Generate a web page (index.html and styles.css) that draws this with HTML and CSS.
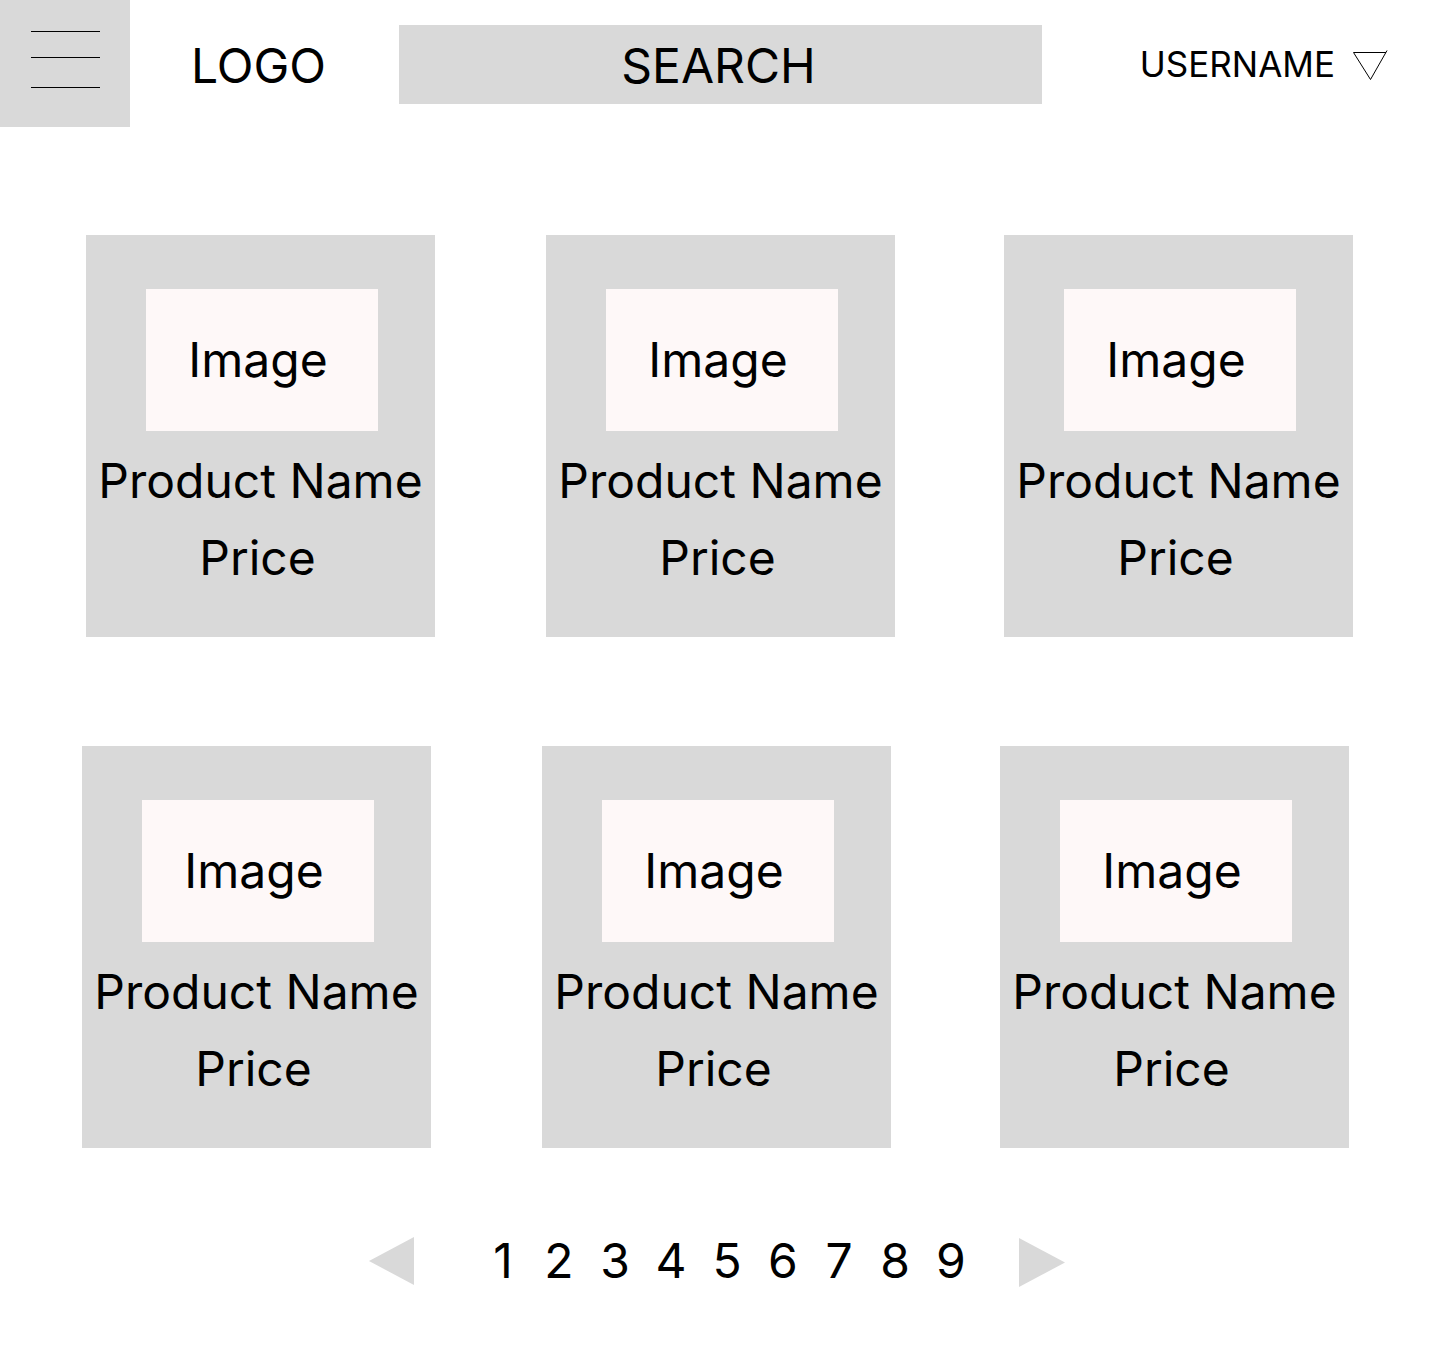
FILE: index.html
```html
<!DOCTYPE html>
<html lang="en">
<head>
<meta charset="utf-8">
<title>Products</title>
<link rel="stylesheet" href="styles.css">
</head>
<body>
<header class="topbar">
  <div class="menu">
    <span class="menu-line"></span>
    <span class="menu-line menu-line--2"></span>
    <span class="menu-line menu-line--3"></span>
  </div>
  <div class="logo">LOGO</div>
  <div class="search">SEARCH</div>
  <div class="user">
    <span class="user-name">USERNAME</span>
    <svg class="user-caret" width="35" height="31" viewBox="0 0 35 31">
      <line x1="0.5" y1="2.5" x2="33" y2="2.5" stroke="#000" stroke-width="1"/>
      <line x1="0.5" y1="2.5" x2="17.5" y2="29.5" stroke="#000" stroke-width="1"/>
      <line x1="34" y1="0.5" x2="17.5" y2="29.5" stroke="#000" stroke-width="1"/>
    </svg>
  </div>
</header>

<main class="products">
  <div class="card-row">
    <div class="card"><div class="card-image">Image</div><div class="card-name">Product Name</div><div class="card-price">Price</div></div>
    <div class="card"><div class="card-image">Image</div><div class="card-name">Product Name</div><div class="card-price">Price</div></div>
    <div class="card"><div class="card-image">Image</div><div class="card-name">Product Name</div><div class="card-price">Price</div></div>
  </div>
  <div class="card-row card-row--second">
    <div class="card"><div class="card-image">Image</div><div class="card-name">Product Name</div><div class="card-price">Price</div></div>
    <div class="card"><div class="card-image">Image</div><div class="card-name">Product Name</div><div class="card-price">Price</div></div>
    <div class="card"><div class="card-image">Image</div><div class="card-name">Product Name</div><div class="card-price">Price</div></div>
  </div>
</main>

<nav class="pager">
  <svg class="pager-prev" width="45" height="48" viewBox="0 0 45 48"><polygon points="45,0 45,48 0,24" fill="#d9d9d9"/></svg>
  <div class="pager-pages">
    <span class="pager-num">1</span><span class="pager-num">2</span><span class="pager-num">3</span><span class="pager-num">4</span><span class="pager-num">5</span><span class="pager-num">6</span><span class="pager-num">7</span><span class="pager-num">8</span><span class="pager-num">9</span>
  </div>
  <svg class="pager-next" width="46" height="49" viewBox="0 0 46 49"><polygon points="0,0 46,24.5 0,49" fill="#d9d9d9"/></svg>
</nav>
</body>
</html>
```

FILE: styles.css
```css
* {
  box-sizing: border-box;
}

html, body {
  margin: 0;
  padding: 0;
  background: #ffffff;
}

body {
  font-family: Inter, "Noto Sans", sans-serif;
  color: #000000;
  width: 1440px;
  height: 1364px;
  overflow: hidden;
}

/* Header */
.topbar {
  display: flex;
  align-items: flex-start;
  height: 127px;
}

.menu {
  width: 130px;
  height: 127px;
  background: #d9d9d9;
  display: flex;
  flex-direction: column;
  padding: 31px 0 0 31px;
}

.menu-line {
  display: block;
  width: 69px;
  height: 1px;
  background: #000000;
}

.menu-line--2 {
  margin-top: 25px;
}

.menu-line--3 {
  margin-top: 29px;
}

.logo {
  width: 269px;
  padding-left: 61px;
  margin-top: 42px;
  font-size: 48px;
  line-height: 48px;
}

.search {
  width: 643px;
  height: 79px;
  margin-top: 25px;
  background: #d9d9d9;
  font-size: 48px;
  line-height: 79px;
  padding: 1px 4px 0 0;
  text-align: center;
}

.user {
  margin-left: auto;
  margin-top: 46px;
  padding-right: 52px;
  display: flex;
  align-items: flex-start;
  gap: 18px;
}

.user-name {
  font-size: 35px;
  line-height: 36px;
}

.user-caret {
  display: block;
  margin-top: 4px;
}

/* Product grid */
.products {
  padding-top: 108px;
}

.card-row {
  display: grid;
  grid-template-columns: 460px 458px 349px;
  padding-left: 86px;
}

.card-row--second {
  margin-top: 109px;
  padding-left: 82px;
}

.card {
  width: 349px;
  height: 402px;
  background: #d9d9d9;
  display: flex;
  flex-direction: column;
}

.card-image {
  width: 232px;
  height: 142px;
  margin: 54px 0 0 60px;
  padding-right: 8px;
  background: #fef8f8;
  font-size: 48px;
  line-height: 142px;
  text-align: center;
}

.card-name,
.card-price {
  font-size: 48px;
  line-height: 77px;
  text-align: center;
  white-space: nowrap;
}

.card-name {
  margin-top: 11px;
}

.card-price {
  padding-right: 6px;
}

/* Pagination */
.pager {
  display: flex;
  align-items: flex-start;
  margin-top: 89px;
  padding-left: 369px;
}

.pager-prev {
  display: block;
}

.pager-pages {
  display: flex;
  margin-left: 61px;
}

.pager-num {
  width: 56px;
  text-align: center;
  font-size: 48px;
  line-height: 48px;
}

.pager-next {
  display: block;
  margin-left: 40px;
  margin-top: 1px;
}
```
